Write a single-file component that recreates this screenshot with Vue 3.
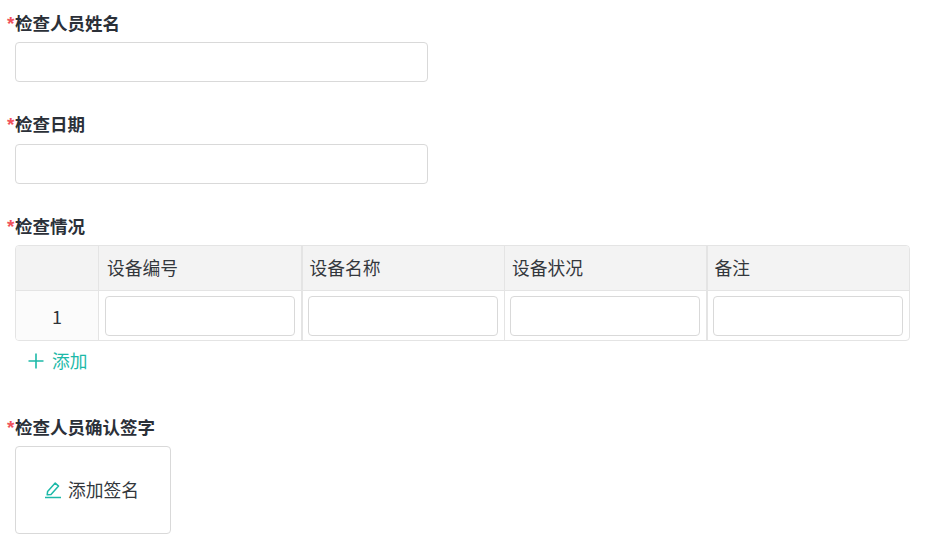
<template>
  <div class="form">
    <div v-for="field in topFields" :key="field" class="form-item">
      <div class="form-label"><span class="required">*</span>{{ field }}</div>
      <div class="form-box"><input class="text-input" type="text"></div>
    </div>

    <div class="form-item form-item--table">
      <div class="form-label"><span class="required">*</span>检查情况</div>
      <div class="form-box form-box--wide">
        <div class="table">
          <div class="table-row table-head">
            <div class="cell cell-index"></div>
            <div v-for="col in columns" :key="col.name" class="cell" :class="{ 'cell-thick': col.thick }">{{ col.name }}</div>
          </div>
          <div class="table-row table-body">
            <div class="cell cell-index">1</div>
            <div v-for="col in columns" :key="col.name" class="cell" :class="{ 'cell-thick': col.thick }">
              <input class="text-input" type="text">
            </div>
          </div>
        </div>
        <div class="add-row">
          <svg width="16" height="16" viewBox="0 0 16 16" fill="none" stroke="currentColor" stroke-width="1.6">
            <path d="M8 0.5V15.5M0.5 8H15.5" />
          </svg>
          <span class="add-text">添加</span>
        </div>
      </div>
    </div>

    <div class="form-item form-item--sign">
      <div class="form-label"><span class="required">*</span>检查人员确认签字</div>
      <div class="form-box">
        <div class="sign-box">
          <svg class="sign-icon" width="16" height="17" viewBox="0 0 16 17" fill="none" stroke="currentColor" stroke-width="1.5">
            <path d="M2.2 12.8L2.6 9.4L10.2 1.1L13.6 4.1L6 12.4Z" stroke-linejoin="round" />
            <path d="M0 15.5H16" />
          </svg>
          <span class="sign-text">添加签名</span>
        </div>
      </div>
    </div>
  </div>
</template>

<script setup>
const topFields = ['检查人员姓名', '检查日期']

const columns = [
  { name: '设备编号', thick: true },
  { name: '设备名称', thick: false },
  { name: '设备状况', thick: true },
  { name: '备注', thick: false },
]
</script>

<style scoped>
.form {
  width: 933px;
  height: 545px;
  overflow: hidden;
  box-sizing: border-box;
  padding-top: 11px;
  font-family: "Microsoft YaHei", "Noto Sans CJK SC", "Noto Sans", sans-serif;
  font-size: 17.75px;
  color: #2f3338;
}

.form-item {
  height: 101.4px;
}

.form-item--table {
  height: 201.2px;
}

.form-label {
  height: 24px;
  line-height: 24px;
  margin-bottom: 7.2px;
  padding-left: 7px;
  font-size: 17.5px;
  font-weight: 700;
  color: #2b3038;
}

.required {
  display: inline-block;
  width: 8px;
  font-family: "Liberation Sans", sans-serif;
  font-size: 19px;
  color: #f0525c;
  font-weight: 700;
}

.form-box {
  padding-left: 15px;
  width: 413px;
}

.form-box--wide {
  width: 895px;
}

.text-input {
  display: block;
  box-sizing: border-box;
  width: 100%;
  height: 40px;
  padding: 0 10px;
  border: 1px solid #d9d9d9;
  border-radius: 4px;
  background: #fff;
  outline: none;
}

.table {
  border: 1px solid #e4e4e4;
  border-radius: 4px;
  overflow: hidden;
}

.table-row {
  display: grid;
  grid-template-columns: 83px 203.5px 202.5px 202.5px 1fr;
}

.table-head {
  height: 44px;
  background: #f3f3f3;
  border-bottom: 1px solid #e4e4e4;
}

.table-body {
  height: 49px;
}

.cell {
  box-sizing: border-box;
  display: flex;
  align-items: center;
  padding: 1px 6px 0;
  border-right: 1px solid #e4e4e4;
}

.cell:last-child {
  border-right: 0;
}

.cell-thick {
  border-right-width: 2px;
}

.table-body .cell + .cell + .cell {
  padding-left: 5px;
}

.table-head .cell {
  padding: 0 0 1px 7px;
  color: #33373c;
}

.table-head .cell-index + .cell {
  padding-left: 8px;
}

.cell-index {
  justify-content: center;
  background: #fbfbfb;
  font-size: 18px;
}

.table-head .cell-index {
  background: transparent;
}

.add-row {
  display: flex;
  align-items: center;
  gap: 8px;
  height: 40px;
  padding-left: 13px;
  color: #1cb9a8;
}

.add-text {
  margin-bottom: 2px;
}

.sign-box {
  box-sizing: border-box;
  display: flex;
  align-items: center;
  justify-content: center;
  gap: 7px;
  width: 156px;
  height: 88px;
  padding-right: 2px;
  border: 1px solid #d9d9d9;
  border-radius: 4px;
  color: #33373c;
}

.sign-text {
  margin-bottom: 2px;
}

.sign-icon {
  color: #1cb9a8;
}
</style>
